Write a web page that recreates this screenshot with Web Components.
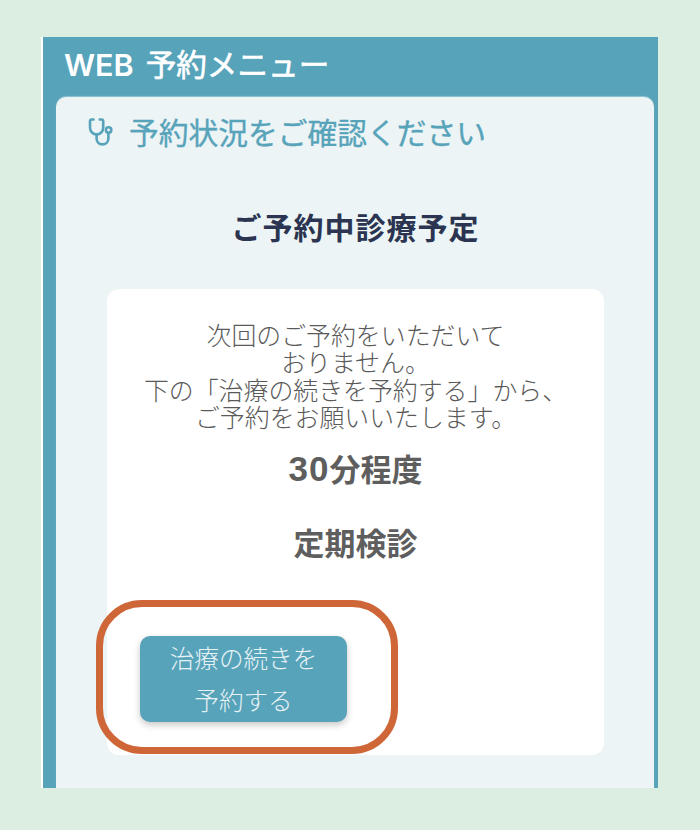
<!DOCTYPE html>
<html lang="ja">
<head>
<meta charset="utf-8">
<style>
  html, body { margin: 0; height: 100%; }
  body {
    background: #dcede2;
    font-family: "Noto Sans CJK JP", "Noto Sans", sans-serif;
    overflow: hidden;
  }
</style>
</head>
<body>
<menu-page>
  <menu-panel title-text="予約状況をご確認ください">
    <reserve-card heading="ご予約中診療予定">
      <span>次回のご予約をいただいて<br>おりません。<br>下の「治療の続きを予約する」から、<br>ご予約をお願いいたします。</span>
    </reserve-card>
  </menu-panel>
</menu-page>
<script>
  customElements.define("menu-page", class extends HTMLElement {
    constructor() {
      super();
      this.attachShadow({ mode: "open" }).innerHTML = `
      <style>
        :host { display: block; padding: 37px 42px 0 41px; height: 793px; overflow: hidden; }
        .frame {
          height: 751px; box-sizing: border-box;
          background: #57a3ba;
          border-left: 2px solid #fff;
          padding: 0 4px 0 13px;
          display: flex; flex-direction: column;
        }
        h1 {
          margin: 0; height: 60px; padding-left: 8px;
          font-size: 30.6px; font-weight: 400; line-height: 52px; color: #fff;
          font-family: "Noto Sans CJK JP", sans-serif;
          -webkit-text-stroke: .6px #fff;
          white-space: nowrap;
          display: flex; align-items: baseline;
        }
        h1 b { font: 600 30.5px/52px Inter, sans-serif; margin-right: 12px; -webkit-text-stroke: 0; }
        ::slotted(*) { flex: 1; }
      </style>
      <div class="frame">
        <h1><b>WEB</b><span>予約メニュー</span></h1>
        <slot></slot>
      </div>`;
    }
  });

  customElements.define("menu-panel", class extends HTMLElement {
    constructor() {
      super();
      this.attachShadow({ mode: "open" }).innerHTML = `
      <style>
        :host {
          display: block; background: #ecf4f5;
          border-radius: 10px 10px 0 0;
          padding: 0 50px 0 51px;
          box-shadow: 0 -1px 1px rgba(255,255,255,.35);
        }
        .head {
          display: flex; align-items: center; gap: 13px;
          margin-left: -19px; height: 68px; margin-bottom: 4px;
          color: #57a3ba; font-size: 29.75px; line-height: 68px;
          -webkit-text-stroke: .35px #57a3ba;
          white-space: nowrap;
        }
        svg { width: 28px; height: 30px; flex: none; margin-top: 1px; }
      </style>
      <div class="head">
        <svg viewBox="0 0 28 30" fill="none" stroke="#57a3ba" stroke-width="2.6" stroke-linecap="round" stroke-linejoin="round">
          <path d="M5.5 2.5H3.6C2.6 2.5 2 3.2 2 4.2V10.5C2 14.6 5 17.4 8.6 17.4S15.2 14.6 15.2 10.5V4.2C15.2 3.2 14.6 2.5 13.6 2.5H11.8"/>
          <path d="M8.6 17.4V21.6C8.6 25 11 27.4 14.4 27.4S20.4 25 20.4 21.6V16.6"/>
          <circle cx="20.6" cy="13" r="2.7"/>
        </svg>
        <span class="t"></span>
      </div>
      <slot></slot>`;
      this.shadowRoot.querySelector(".t").textContent = this.getAttribute("title-text");
    }
  });

  customElements.define("reserve-card", class extends HTMLElement {
    constructor() {
      super();
      this.attachShadow({ mode: "open" }).innerHTML = `
      <style>
        :host { display: block; }
        h2 {
          margin: 0; height: 120px; text-align: center;
          font-size: 30px; font-weight: 700; color: #2b3450;
          line-height: 114px; letter-spacing: 1px;
        }
        .card {
          background: #fff; border-radius: 12px;
          height: 466px; box-sizing: border-box;
          padding: 32px 32px 0 32px;
          position: relative;
          color: #6a6a6a; text-align: center;
        }
        .msg { font-size: 24.9px; line-height: 27.4px; font-weight: 300; color: #5a5a5a; white-space: nowrap; }
        .big { font-weight: 700; color: #5e5e5e; }
        .big b { font: 700 35px/40px "Liberation Sans", sans-serif; letter-spacing: 1px; }
        .time { font-size: 31px; line-height: 40px; margin-top: 17px; }
        .kind { font-size: 31px; line-height: 40px; margin-top: 33px; }
        .btn {
          display: block; box-sizing: border-box;
          width: 207px; height: 86px; margin-top: 74px; margin-left: 1px;
          background: #57a3ba; color: #e6f2f5; border: 0; border-radius: 10px;
          font: 300 24.6px/41.5px "Noto Sans CJK JP", sans-serif;
          padding: 0 20px 0;
          box-shadow: 0 3px 7px rgba(0,0,0,.22);
        }
        .ring {
          position: absolute; left: -11px; top: 311px;
          width: 302px; height: 154px; box-sizing: border-box;
          border: 7px solid #cf6638; border-radius: 46px;
        }
      </style>
      <h2></h2>
      <div class="card">
        <div class="msg"><slot></slot></div>
        <div class="big time"><b>30</b>分程度</div>
        <div class="big kind">定期検診</div>
        <button class="btn">治療の続きを予約する</button>
        <div class="ring"></div>
      </div>`;
      this.shadowRoot.querySelector("h2").textContent = this.getAttribute("heading");
    }
  });
</script>
</body>
</html>
